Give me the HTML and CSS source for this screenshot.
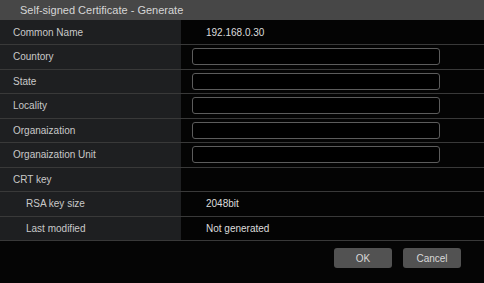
FILE: index.html
```html
<!DOCTYPE html>
<html lang="en">
<head>
  <meta charset="UTF-8" />
  <meta name="viewport" content="width=device-width, initial-scale=1.0" />
  <title>Self-signed Certificate - Generate</title>
  <link rel="stylesheet" href="styles.css">
</head>
<body>
  <div class="dialog">
    <div class="dialog-title">Self-signed Certificate - Generate</div>
    <table class="form">
      <colgroup>
        <col class="col-label">
        <col>
      </colgroup>
      <tbody>
        <tr>
          <th>Common Name</th>
          <td class="value">192.168.0.30</td>
        </tr>
        <tr>
          <th>Countory</th>
          <td><input type="text" class="field"></td>
        </tr>
        <tr>
          <th>State</th>
          <td><input type="text" class="field"></td>
        </tr>
        <tr>
          <th>Locality</th>
          <td><input type="text" class="field"></td>
        </tr>
        <tr>
          <th>Organaization</th>
          <td><input type="text" class="field"></td>
        </tr>
        <tr>
          <th>Organaization Unit</th>
          <td><input type="text" class="field"></td>
        </tr>
        <tr>
          <th>CRT key</th>
          <td></td>
        </tr>
        <tr>
          <th class="sub">RSA key size</th>
          <td class="value">2048bit</td>
        </tr>
        <tr>
          <th class="sub">Last modified</th>
          <td class="value">Not generated</td>
        </tr>
      </tbody>
    </table>
    <div class="actions">
      <button class="btn">OK</button>
      <button class="btn">Cancel</button>
    </div>
  </div>
</body>
</html>
```

FILE: styles.css
```css
* { box-sizing: border-box; }
body {
  margin: 0;
  background: #050505;
  font-family: 'Liberation Sans', Arial, sans-serif;
  color: #cfcfcf;
}
.dialog {
  width: 484px;
  height: 283px;
  background: #050505;
}
.dialog-title {
  height: 20px;
  line-height: 20px;
  padding-left: 20px;
  background: #474747;
  color: #d6d6d6;
  font-size: 11px;
}
.form {
  width: 100%;
  border-collapse: collapse;
  table-layout: fixed;
}
.col-label { width: 181px; }
.form th,
.form td {
  height: 24.5px;
  padding: 0;
  border-bottom: 1px solid #393939;
  font-size: 10px;
  font-weight: normal;
  text-align: left;
  vertical-align: middle;
}
.form th {
  background: #1e1f21;
  color: #c9c9c9;
  padding-left: 13px;
}
.form th.sub { padding-left: 26px; }
.form td {
  background: #040404;
  padding-left: 11px;
}
.form td.value {
  padding-left: 25px;
  color: #dcdcdc;
}
.field {
  display: block;
  width: 248px;
  height: 17px;
  margin: 0;
  padding: 0 4px;
  background: #000;
  border: 1px solid #5c5c5c;
  border-radius: 3px;
  color: #ddd;
  font-family: inherit;
  font-size: 10px;
  outline: none;
}
.actions {
  display: flex;
  justify-content: flex-end;
  gap: 11px;
  padding: 7px 23px 0 0;
}
.btn {
  width: 58px;
  height: 20px;
  background: #525252;
  border: none;
  border-radius: 3px;
  color: #d8d8d8;
  font-family: inherit;
  font-size: 10px;
  cursor: pointer;
}
```
